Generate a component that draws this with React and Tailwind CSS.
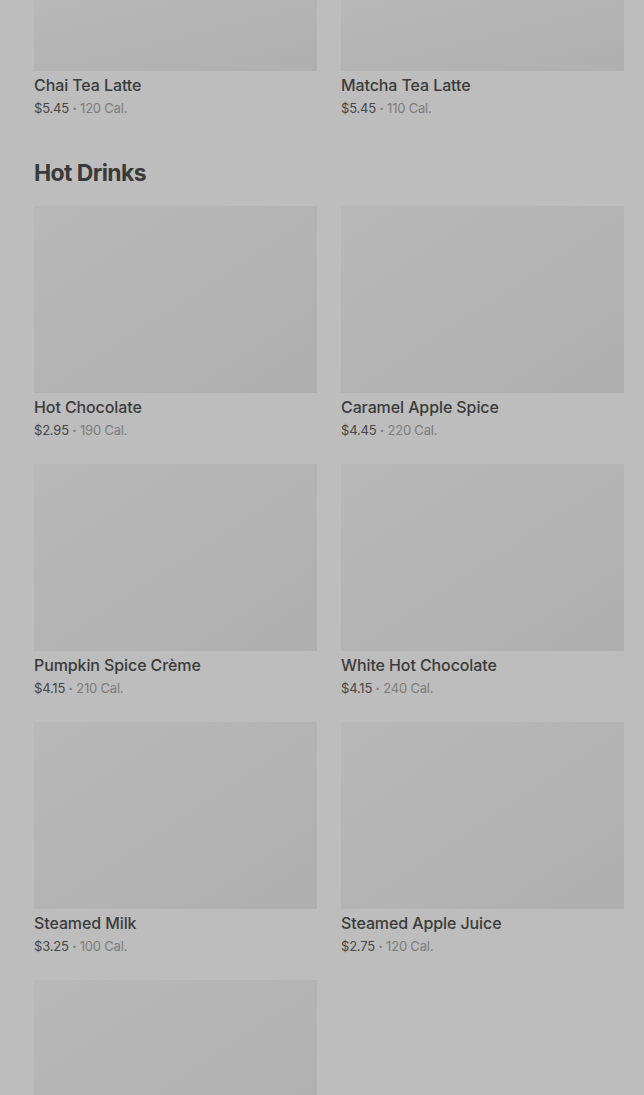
import React from 'react'

const topRow = [
  { name: 'Chai Tea Latte', price: '$5.45', cal: '120 Cal.' },
  { name: 'Matcha Tea Latte', price: '$5.45', cal: '110 Cal.' },
]

const hotDrinks = [
  { name: 'Hot Chocolate', price: '$2.95', cal: '190 Cal.' },
  { name: 'Caramel Apple Spice', price: '$4.45', cal: '220 Cal.' },
  { name: 'Pumpkin Spice Crème', price: '$4.15', cal: '210 Cal.' },
  { name: 'White Hot Chocolate', price: '$4.15', cal: '240 Cal.' },
  { name: 'Steamed Milk', price: '$3.25', cal: '100 Cal.' },
  { name: 'Steamed Apple Juice', price: '$2.75', cal: '120 Cal.' },
  { name: '', price: '', cal: '' },
]

const Item = ({ item, short }) => (
  <div className="flex flex-col">
    <div
      className={`${short ? 'h-[71px]' : 'h-[187px]'} w-full bg-gradient-to-br from-[#b8b8b8] to-[#afafaf]`}
    ></div>
    {item.name && (
      <>
        <p className="mt-[4px] text-[16px] leading-[20px] font-medium tracking-[-0.1px] text-[#3b3b3b]">{item.name}</p>
        <p className="mt-[4px] text-[13px] leading-[18px] tracking-[-0.2px] text-[#7c7c7c]">
          <span className="text-[#464646]">{item.price}</span> <span className="font-bold">·</span> {item.cal}
        </p>
      </>
    )}
  </div>
)

const App = () => {
  return (
    <div
      className="h-[1095px] overflow-hidden bg-[#bdbdbd] pl-[34px] pr-[20px]"
      style={{ fontFamily: 'Inter, "Noto Sans", sans-serif' }}
    >
      {/* cut-off row from previous section */}
      <div className="grid grid-cols-2 gap-x-[24px]">
        {topRow.map((item, i) => (
          <Item key={i} item={item} short />
        ))}
      </div>

      <h2 className="mt-[42px] text-[23px] leading-[28px] font-bold tracking-[-0.6px] text-[#3a3a3a]">
        Hot Drinks
      </h2>

      <div className="mt-[19px] grid grid-cols-2 gap-x-[24px] gap-y-[25px]">
        {hotDrinks.map((item, i) => (
          <Item key={i} item={item} />
        ))}
      </div>
    </div>
  )
}

export default App
